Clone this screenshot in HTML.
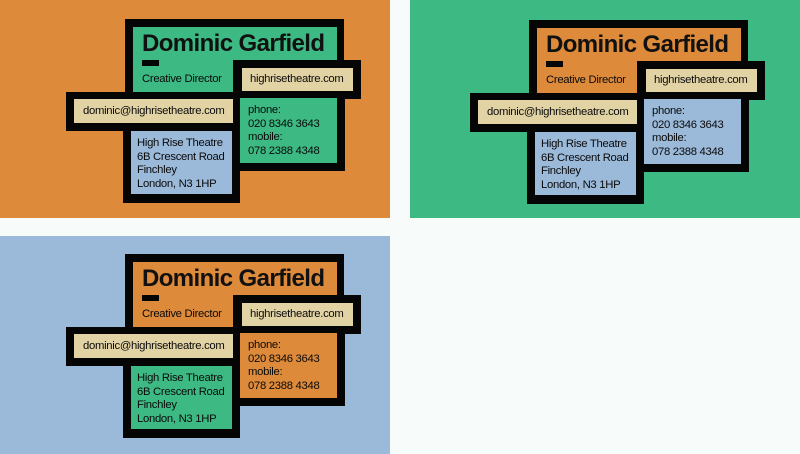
<!DOCTYPE html>
<html><head><meta charset="utf-8"><style>
*{margin:0;padding:0;box-sizing:border-box}
body{width:800px;height:454px;background:#f7fcfa;position:relative;overflow:hidden;font-family:"Liberation Sans",sans-serif;color:#111}
.p{position:absolute}
.card{position:absolute;width:240px;height:190px}
.card div{position:absolute}
.k{background:#050505}
.t{font-size:11.3px;letter-spacing:-0.3px;line-height:13.5px;white-space:nowrap;color:#0a0a0a}
.name{font-size:24px;font-weight:bold;letter-spacing:-0.6px;line-height:26px;white-space:nowrap}
</style></head><body>
<div class="p" style="left:0;top:0;width:390px;height:218px;background:#dd8a3a"></div>
<div class="p" style="left:410px;top:0;width:390px;height:218px;background:#3dba84"></div>
<div class="p" style="left:0;top:236px;width:390px;height:218px;background:#9bb9d9"></div>

<div class="card" style="left:125px;top:19px">
 <div class="k" style="left:0;top:0;width:219px;height:76px"></div>
 <div style="left:8px;top:8px;width:204px;height:65px;background:#3dba84"></div>
 <div class="k" style="left:-2px;top:110px;width:117px;height:74px"></div>
 <div class="k" style="left:107px;top:76px;width:113px;height:76px"></div>
 <div class="k" style="left:108px;top:41px;width:128px;height:39px"></div>
 <div class="k" style="left:-59px;top:73px;width:176px;height:39px"></div>
 <div style="left:117px;top:49px;width:111px;height:23px;background:#e2d3a5"></div>
 <div style="left:-51px;top:80px;width:159px;height:24px;background:#e2d3a5"></div>
 <div style="left:6px;top:112px;width:101px;height:63px;background:#9bb9d9"></div>
 <div style="left:115px;top:79px;width:97px;height:65px;background:#3dba84"></div>
 <div class="name" style="left:17px;top:12px">Dominic Garfield</div>
 <div class="k" style="left:17px;top:41px;width:17px;height:6px"></div>
 <div class="t" style="left:17px;top:54px">Creative Director</div>
 <div class="t" style="left:125px;top:54px">highrisetheatre.com</div>
 <div class="t" style="left:-42px;top:86px">dominic@highrisetheatre.com</div>
 <div class="t" style="left:12px;top:118px">High Rise Theatre<br>6B Crescent Road<br>Finchley<br>London, N3 1HP</div>
 <div class="t" style="left:123px;top:85px">phone:<br>020 8346 3643<br>mobile:<br>078 2388 4348</div>
</div>

<div class="card" style="left:529px;top:20px">
 <div class="k" style="left:0;top:0;width:219px;height:76px"></div>
 <div style="left:8px;top:8px;width:204px;height:65px;background:#dd8a3a"></div>
 <div class="k" style="left:-2px;top:110px;width:117px;height:74px"></div>
 <div class="k" style="left:107px;top:76px;width:113px;height:76px"></div>
 <div class="k" style="left:108px;top:41px;width:128px;height:39px"></div>
 <div class="k" style="left:-59px;top:73px;width:176px;height:39px"></div>
 <div style="left:117px;top:49px;width:111px;height:23px;background:#e2d3a5"></div>
 <div style="left:-51px;top:80px;width:159px;height:24px;background:#e2d3a5"></div>
 <div style="left:6px;top:112px;width:101px;height:63px;background:#9bb9d9"></div>
 <div style="left:115px;top:79px;width:97px;height:65px;background:#9bb9d9"></div>
 <div class="name" style="left:17px;top:12px">Dominic Garfield</div>
 <div class="k" style="left:17px;top:41px;width:17px;height:6px"></div>
 <div class="t" style="left:17px;top:54px">Creative Director</div>
 <div class="t" style="left:125px;top:54px">highrisetheatre.com</div>
 <div class="t" style="left:-42px;top:86px">dominic@highrisetheatre.com</div>
 <div class="t" style="left:12px;top:118px">High Rise Theatre<br>6B Crescent Road<br>Finchley<br>London, N3 1HP</div>
 <div class="t" style="left:123px;top:85px">phone:<br>020 8346 3643<br>mobile:<br>078 2388 4348</div>
</div>

<div class="card" style="left:125px;top:254px">
 <div class="k" style="left:0;top:0;width:219px;height:76px"></div>
 <div style="left:8px;top:8px;width:204px;height:65px;background:#dd8a3a"></div>
 <div class="k" style="left:-2px;top:110px;width:117px;height:74px"></div>
 <div class="k" style="left:107px;top:76px;width:113px;height:76px"></div>
 <div class="k" style="left:108px;top:41px;width:128px;height:39px"></div>
 <div class="k" style="left:-59px;top:73px;width:176px;height:39px"></div>
 <div style="left:117px;top:49px;width:111px;height:23px;background:#e2d3a5"></div>
 <div style="left:-51px;top:80px;width:159px;height:24px;background:#e2d3a5"></div>
 <div style="left:6px;top:112px;width:101px;height:63px;background:#3dba84"></div>
 <div style="left:115px;top:79px;width:97px;height:65px;background:#dd8a3a"></div>
 <div class="name" style="left:17px;top:12px">Dominic Garfield</div>
 <div class="k" style="left:17px;top:41px;width:17px;height:6px"></div>
 <div class="t" style="left:17px;top:54px">Creative Director</div>
 <div class="t" style="left:125px;top:54px">highrisetheatre.com</div>
 <div class="t" style="left:-42px;top:86px">dominic@highrisetheatre.com</div>
 <div class="t" style="left:12px;top:118px">High Rise Theatre<br>6B Crescent Road<br>Finchley<br>London, N3 1HP</div>
 <div class="t" style="left:123px;top:85px">phone:<br>020 8346 3643<br>mobile:<br>078 2388 4348</div>
</div>
</body></html>
